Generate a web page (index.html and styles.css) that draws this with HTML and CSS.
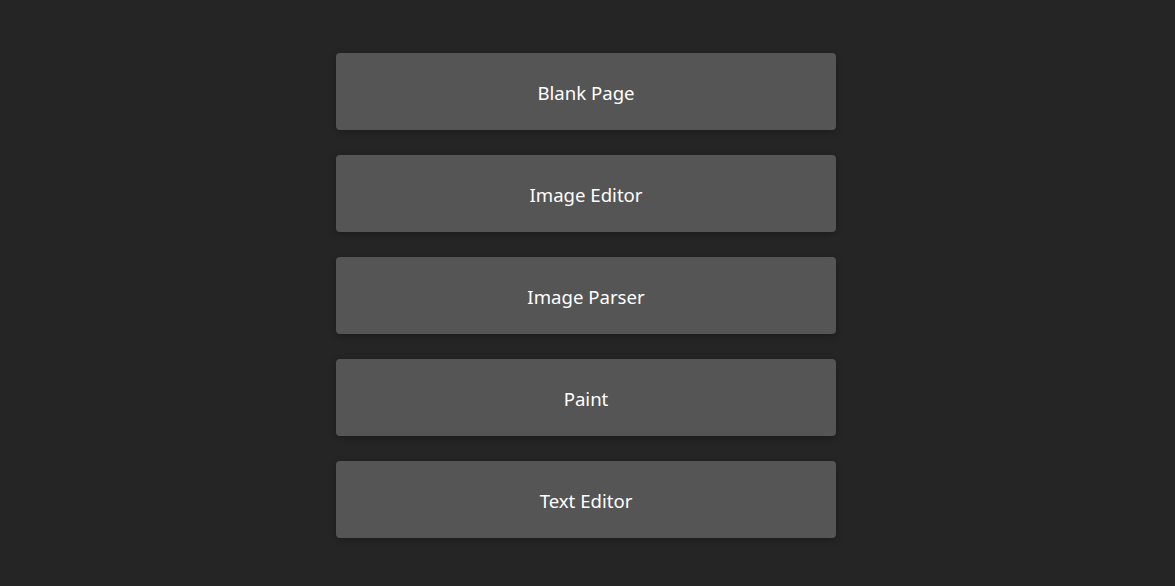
FILE: index.html
```html
<!DOCTYPE html>
<html>
<head>
<meta charset="utf-8">
<link rel="stylesheet" href="styles.css">
</head>
<body>
<div class="menu">
  <button class="item">Blank Page</button>
  <button class="item">Image Editor</button>
  <button class="item">Image Parser</button>
  <button class="item">Paint</button>
  <button class="item">Text Editor</button>
</div>
</body>
</html>
```
FILE: styles.css
```css
html, body {
  margin: 0;
  background: #252525;
  height: 100%;
}
body {
  font-family: "Noto Sans", "Open Sans", sans-serif;
}
.menu {
  width: 500px;
  margin: 0 auto;
  padding-top: 53px;
  display: flex;
  flex-direction: column;
  gap: 25px;
  position: relative;
  left: -1.5px;
}
.item {
  height: 77px;
  border: none;
  border-radius: 4px;
  background: #555555;
  color: #ffffff;
  font-family: inherit;
  font-size: 18.6px;
  box-shadow: 0 2px 6px rgba(0,0,0,0.25);
  padding: 2px 0 0 0;
  cursor: pointer;
}
```
